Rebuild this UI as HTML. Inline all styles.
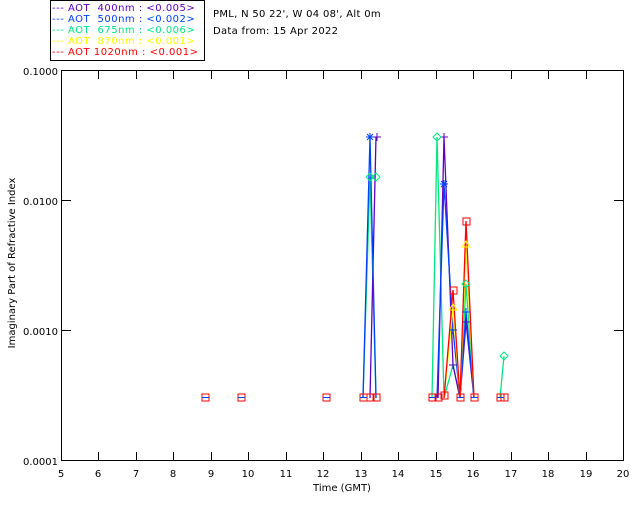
<!DOCTYPE html>
<html><head><meta charset="utf-8"><style>
body{margin:0;background:#fff;}
svg{display:block;font-family:"DejaVu Sans","Liberation Sans",sans-serif;font-size:10px;}
</style></head><body>
<svg width="640" height="512" viewBox="0 0 640 512" xmlns="http://www.w3.org/2000/svg">
<rect width="640" height="512" fill="#fff"/>
<!-- legend -->
<rect x="50.5" y="0.5" width="154" height="60" fill="#fff" stroke="#000"/>
<g font-size="10" letter-spacing="0.5">
<text x="52" y="11" fill="#6000c0">--- AOT &#160;400nm : &lt;0.005&gt;</text>
<text x="52" y="22" fill="#0040ff">--- AOT &#160;500nm : &lt;0.002&gt;</text>
<text x="52" y="33" fill="#00e880">--- AOT &#160;675nm : &lt;0.006&gt;</text>
<text x="52" y="44" fill="#ffff00">--- AOT &#160;870nm : &lt;0.001&gt;</text>
<text x="52" y="55" fill="#ff0000">--- AOT 1020nm : &lt;0.001&gt;</text>
</g>
<g font-size="10" letter-spacing="0.3" fill="#000">
<text x="213" y="17">PML, N 50 22', W 04 08', Alt 0m</text>
<text x="213" y="34">Data from: 15 Apr 2022</text>
</g>
<!-- axes -->
<rect x="61.5" y="70.5" width="562" height="390" fill="none" stroke="#000"/>
<g stroke="#000">
<path d="M98.5 461v-9M136.5 461v-9M173.5 461v-9M211.5 461v-9M248.5 461v-9M286.5 461v-9M323.5 461v-9M361.5 461v-9M398.5 461v-9M436.5 461v-9M473.5 461v-9M511.5 461v-9M548.5 461v-9M586.5 461v-9"/>
<path d="M98.5 70v9M136.5 70v9M173.5 70v9M211.5 70v9M248.5 70v9M286.5 70v9M323.5 70v9M361.5 70v9M398.5 70v9M436.5 70v9M473.5 70v9M511.5 70v9M548.5 70v9M586.5 70v9"/>
<path d="M61 200.5h10M61 330.5h10M614 200.5h10M614 330.5h10"/>
</g>
<g font-size="10" fill="#000">
<text x="58" y="75" text-anchor="end">0.1000</text>
<text x="58" y="205" text-anchor="end">0.0100</text>
<text x="58" y="335" text-anchor="end">0.0010</text>
<text x="58" y="465" text-anchor="end">0.0001</text>
<g text-anchor="middle">
<text x="61" y="477">5</text><text x="98" y="477">6</text><text x="136" y="477">7</text><text x="173" y="477">8</text><text x="211" y="477">9</text><text x="248" y="477">10</text><text x="286" y="477">11</text><text x="323" y="477">12</text><text x="361" y="477">13</text><text x="398" y="477">14</text><text x="436" y="477">15</text><text x="473" y="477">16</text><text x="511" y="477">17</text><text x="548" y="477">18</text><text x="586" y="477">19</text><text x="623" y="477">20</text>
<text x="342" y="491">Time (GMT)</text>
<text transform="translate(15,263) rotate(-90)">Imaginary Part of Refractive Index</text>
</g>
</g>
<!-- data lines -->
<g fill="none" stroke-width="1.3">
<polyline stroke="#00e880" points="363,398 370,177 376,398"/>
<polyline stroke="#00e880" points="432,398 437,137 444,398 453,365 460,398 466,284 474,398"/>
<polyline stroke="#00e880" points="500,398 504,356"/>
<polyline stroke="#6000c0" points="370,398 376,137"/>
<polyline stroke="#6000c0" points="438,398 444,137 453,365 460,398 466,322 474,398"/>
<polyline stroke="#0040ff" points="363,398 370,137 376,398"/>
<polyline stroke="#0040ff" points="437,398 444,184 453,330 460,398 466,312 474,398"/>
<polyline stroke="#ffff00" points="444,398 453,308 460,398 466,245 474,398"/>
<polyline stroke="#ff0000" points="444,398 453,290 460,398 466,221 474,398"/>
</g>
<!-- markers -->
<g fill="none" stroke-width="1">
<g stroke="#ff0000">
<rect x="202" y="394" width="7" height="7"/><rect x="238" y="394" width="7" height="7"/><rect x="323" y="394" width="7" height="7"/><rect x="360" y="394" width="7" height="7"/><rect x="367" y="394" width="7" height="7"/><rect x="373" y="394" width="7" height="7"/><rect x="429" y="394" width="7" height="7"/><rect x="435" y="394" width="7" height="7"/><rect x="441" y="392" width="7" height="7"/><rect x="457" y="394" width="7" height="7"/><rect x="471" y="394" width="7" height="7"/><rect x="497" y="394" width="7" height="7"/><rect x="501" y="394" width="7" height="7"/>
<rect x="450" y="287" width="7" height="7"/><rect x="463" y="218" width="7" height="7"/>
</g>
<g stroke="#0040ff"><path d="M366 137h8M370 133v8M367 134l6 6M373 134l-6 6M440 184h8M444 180v8M441 181l6 6M447 181l-6 6M449 330h8M453 326v8M462 312h8M466 308v8M202 397.5h7M238 397.5h7M323 397.5h7M360 397.5h7M429 397.5h7M457 397.5h7M471 397.5h7M497 397.5h7"/></g>
<g stroke="#6000c0"><path d="M373 137h8M377 133v8M441 137h7M444 133v8M449 365h8M453 361v8M462 322h8M466 318v8"/></g>
<g stroke="#00e880"><path d="M370 173l4 4-4 4-4-4zM376 173l4 4-4 4-4-4zM437 133l4 4-4 4-4-4zM466 280l4 4-4 4-4-4zM504 352l4 4-4 4-4-4z"/></g>
<g stroke="#ffff00"><path d="M466 241l4 6h-8zM453 304l4 6h-8z"/></g>
</g>
</svg>
</body></html>
